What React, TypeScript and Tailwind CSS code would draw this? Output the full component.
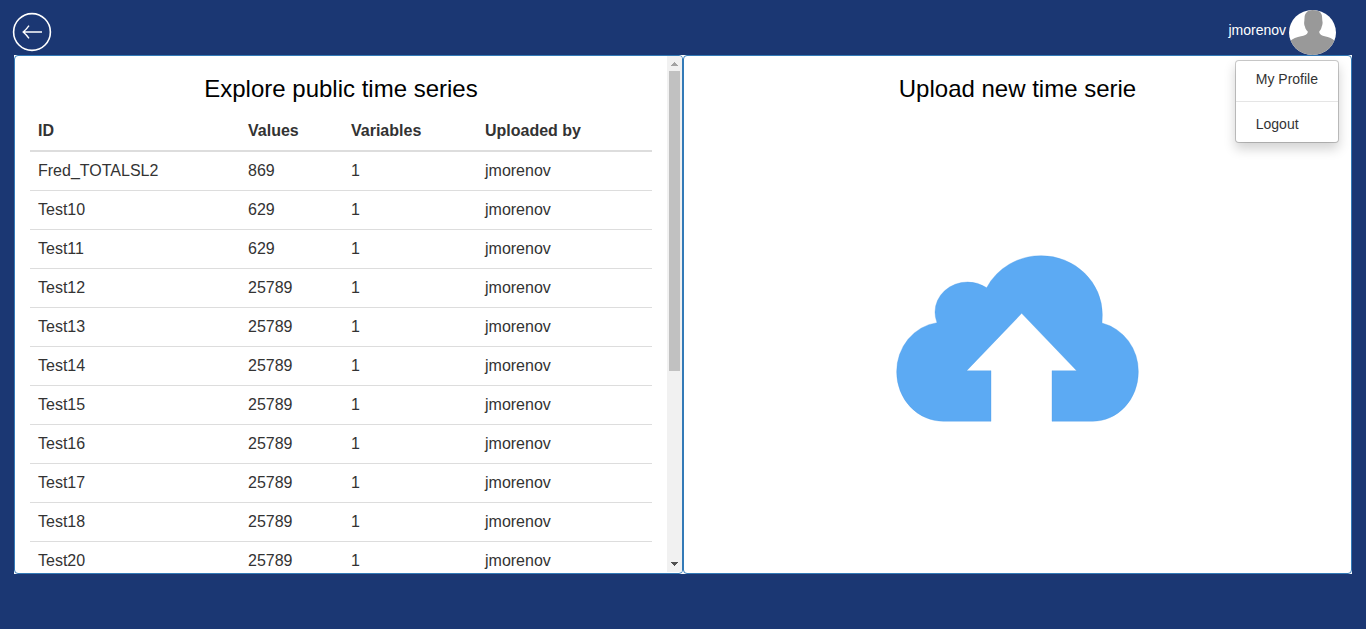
import React from "react";

type Series = { id: string; values: number; variables: number; owner: string };

const series: Series[] = [
  { id: "Fred_TOTALSL2", values: 869, variables: 1, owner: "jmorenov" },
  { id: "Test10", values: 629, variables: 1, owner: "jmorenov" },
  { id: "Test11", values: 629, variables: 1, owner: "jmorenov" },
  { id: "Test12", values: 25789, variables: 1, owner: "jmorenov" },
  { id: "Test13", values: 25789, variables: 1, owner: "jmorenov" },
  { id: "Test14", values: 25789, variables: 1, owner: "jmorenov" },
  { id: "Test15", values: 25789, variables: 1, owner: "jmorenov" },
  { id: "Test16", values: 25789, variables: 1, owner: "jmorenov" },
  { id: "Test17", values: 25789, variables: 1, owner: "jmorenov" },
  { id: "Test18", values: 25789, variables: 1, owner: "jmorenov" },
  { id: "Test20", values: 25789, variables: 1, owner: "jmorenov" },
];

function BackIcon() {
  return (
    <svg viewBox="0 0 40 40" className="size-10" fill="none" stroke="#fff" aria-hidden="true">
      <circle cx="20" cy="20" r="18.4" strokeWidth="1.6" />
      <path d="M30 20H11.5M17 13.6Q14.5 17.2 11.2 20Q14.5 22.8 17 26.4" strokeWidth="1.4" />
    </svg>
  );
}

function Avatar() {
  return (
    <svg viewBox="0 0 141 135" preserveAspectRatio="none" className="h-[45px] w-[47px]" aria-hidden="true">
      <defs>
        <clipPath id="avatar-clip">
          <ellipse cx="70.5" cy="67.5" rx="70.5" ry="67.5" />
        </clipPath>
      </defs>
      <g clipPath="url(#avatar-clip)">
        <rect width="141" height="135" fill="#fff" />
        <path
          fill="#999"
          d="M47 18C50 5 60 0 73 0C88 0 97 6 99 18L100 32C102 37 100 46 98 50C97 57 94 61 91 64V68C93 74 99 77 107 79C119 82 132 86 138 94L141 135H0L3 94C10 86 24 82 36 79C46 76 54 74 56 68V64C52 60 49 56 48 50C45 45 45 37 46 32Z"
        />
      </g>
    </svg>
  );
}

function CloudUploadIcon() {
  return (
    <svg viewBox="48 46 729 501" className="h-[167px] w-[243px]" aria-hidden="true">
      <path
        fill="#5caaf3"
        stroke="#4b9be6"
        strokeWidth="1"
        d="M333 545H190A140 148 0 0 1 50 397A140 148 0 0 1 171 249A98 90 0 0 1 165 217A98 90 0 0 1 263 127A98 90 0 0 1 320 144A183 177 0 0 1 484 48A183 177 0 0 1 667 225L666 250A144 149 0 0 1 775 397A137 148 0 0 1 638 545H516V393H590L425 221L260 393H333Z"
      />
    </svg>
  );
}

function ScrollTrack() {
  return (
    <div className="mb-px flex w-[15px] shrink-0 flex-col items-center bg-[#f1f1f1]" aria-hidden="true">
      <svg viewBox="0 0 15 15" className="size-[15px]" shapeRendering="crispEdges">
        <path d="M7 6h1v1h1v1h1v1h1v1H4V9h1V8h1V7h1z" fill="#a3a3a3" />
      </svg>
      <div className="flex w-[11px] flex-1 flex-col">
        <div className="h-[300px] max-h-full bg-[#c1c1c1]" />
      </div>
      <svg viewBox="0 0 15 15" className="size-[15px]" shapeRendering="crispEdges">
        <path d="M4 5h7v1h-1v1H9v1H8v1H7V8H6V7H5V6H4z" fill="#505050" />
      </svg>
    </div>
  );
}

function UserMenu() {
  return (
    <div className="relative">
      <button type="button" aria-haspopup="menu" aria-expanded="true" className="flex items-center gap-[3px] text-sm text-white">
        <span className="pb-[6px]">jmorenov</span>
        <Avatar />
      </button>
      <ul
        role="menu"
        className="absolute -right-[3px] top-[50px] z-10 rounded border border-black/20 bg-white bg-clip-padding py-[5px] text-sm leading-5 whitespace-nowrap text-[#333] shadow-[0_6px_12px_rgba(0,0,0,0.175)]"
      >
        <li role="none">
          <a role="menuitem" href="#profile" className="block px-5 py-[3px] hover:bg-gray-100">
            My Profile
          </a>
        </li>
        <li role="separator" className="my-[9px] h-px bg-[#e5e5e5]" />
        <li role="none">
          <a role="menuitem" href="#logout" className="block px-5 py-[3px] hover:bg-gray-100">
            Logout
          </a>
        </li>
      </ul>
    </div>
  );
}

export default function App() {
  return (
    <div className="flex h-screen flex-col bg-[#1b3773] font-['Liberation_Sans',Arial,sans-serif]">
      <header className="flex shrink-0 items-start justify-between pr-[30px] pl-3">
        <button type="button" aria-label="Back" className="pt-3">
          <BackIcon />
        </button>
        <div className="pt-[10px]">
          <UserMenu />
        </div>
      </header>

      <main className="flex min-h-0 flex-1 px-[14px] pb-[55px]">
        <div className="grid min-h-0 flex-1 grid-cols-2 grid-rows-[minmax(0,1fr)] bg-white">
          <section className="flex min-h-0 overflow-hidden rounded border border-[#337ab7] bg-white">
            <div className="min-w-0 flex-1 overflow-y-auto px-[15px] [scrollbar-width:none]">
              <h1 className="pt-[18px] pb-2 text-center text-2xl leading-[30px] text-black">Explore public time series</h1>
              <table className="w-full table-fixed text-left text-base leading-[22px] text-[#333]">
                <thead>
                  <tr className="border-b-2 border-[#ddd]">
                    <th scope="col" className="w-[210px] p-2 font-bold">ID</th>
                    <th scope="col" className="w-[103px] p-2 font-bold">Values</th>
                    <th scope="col" className="w-[134px] p-2 font-bold">Variables</th>
                    <th scope="col" className="p-2 font-bold">Uploaded by</th>
                  </tr>
                </thead>
                <tbody>
                  {series.map((s) => (
                    <tr key={s.id} className="border-b border-[#ddd]">
                      <td className="p-2">{s.id}</td>
                      <td className="p-2">{s.values}</td>
                      <td className="p-2">{s.variables}</td>
                      <td className="p-2">{s.owner}</td>
                    </tr>
                  ))}
                </tbody>
              </table>
            </div>
            <ScrollTrack />
          </section>

          <section className="flex min-h-0 flex-col rounded border border-[#337ab7] bg-white">
            <h1 className="pt-[18px] text-center text-2xl leading-[30px] text-black">Upload new time serie</h1>
            <div className="flex flex-1 items-center justify-center">
              <button type="button" aria-label="Upload new time serie">
                <CloudUploadIcon />
              </button>
            </div>
          </section>
        </div>
      </main>
    </div>
  );
}
